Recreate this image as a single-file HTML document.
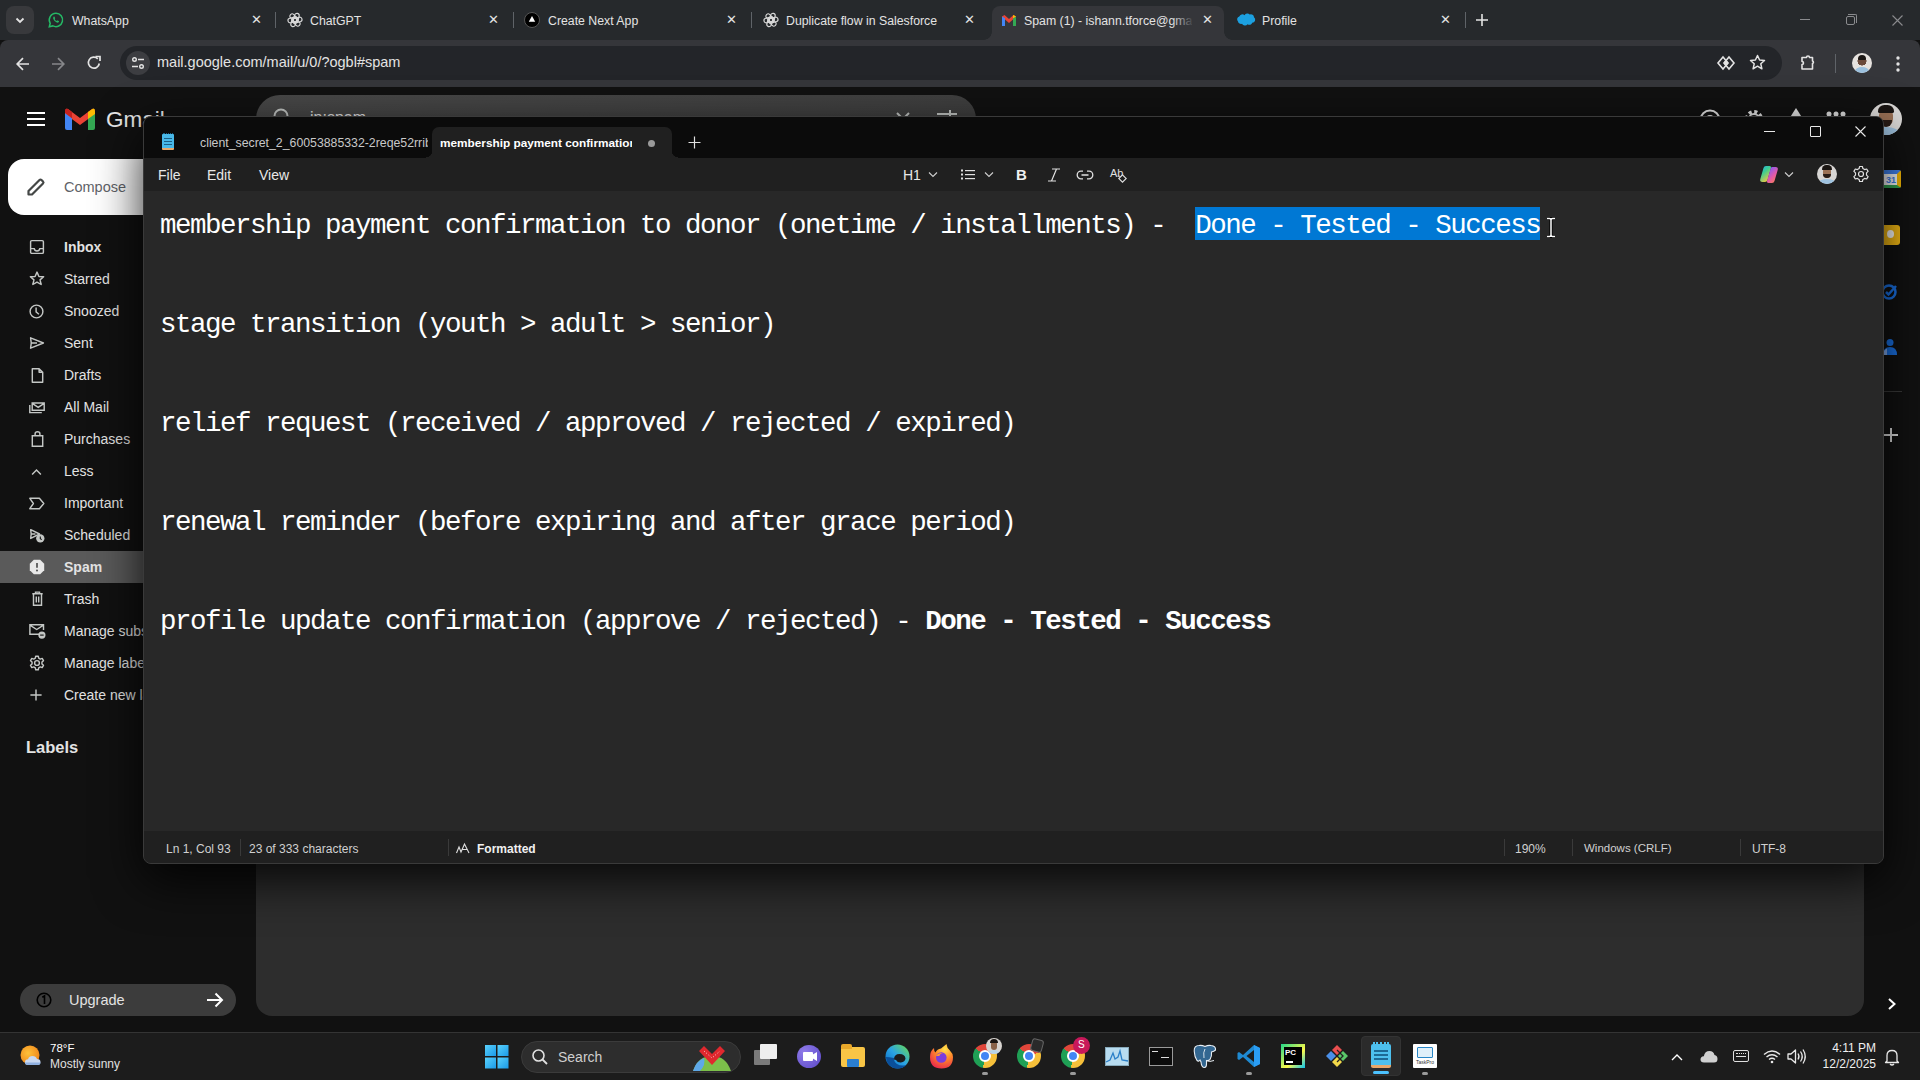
<!DOCTYPE html>
<html><head><meta charset="utf-8">
<style>
*{margin:0;padding:0;box-sizing:border-box}
html,body{width:1920px;height:1080px;overflow:hidden;background:#111111;font-family:"Liberation Sans",sans-serif;position:relative}
.a{position:absolute}
.t{position:absolute;white-space:nowrap}
svg{position:absolute;overflow:visible}
.ni{transform:scale(0.8);transform-origin:50% 50%}
/* chrome */
#tabstrip{left:0;top:0;width:1920px;height:40px;background:#26292c}
#toolbar{left:0;top:40px;width:1920px;height:47px;background:#35363a;border-radius:8px 8px 0 0}
#omni{left:120px;top:46px;width:1662px;height:34px;background:#232529;border-radius:17px}
.tabtxt{font-size:12.3px;color:#e3e3e3;top:14px}
.tabx{font-size:13px;color:#e3e3e3}
.tsep{top:12px;width:1px;height:16px;background:#5f6368}
/* gmail */
#gm{left:0;top:87px;width:1920px;height:945px;background:#111111}
.nav{font-size:14px;color:#e3e3e3;left:64px;margin-top:1px}
/* taskbar */
#taskbar{left:0;top:1032px;width:1920px;height:48px;background:#1c1c1c;border-top:1px solid #343434}
/* notepad */
#np{left:143px;top:116px;width:1741px;height:748px;background:#282828;border-radius:8px;overflow:hidden;border:1px solid #3a3a3a;box-shadow:0 16px 48px rgba(0,0,0,0.85)}
#nptitle{left:0;top:0;width:100%;height:41px;background:#0b0b0b}
#npmenu{left:0;top:41px;width:100%;height:33px;background:#202020}
#npstatus{left:0;top:714px;width:100%;height:33px;background:#202020}
.mono{font-family:"Liberation Mono",monospace;font-size:27.5px;letter-spacing:-1.5px;color:#ffffff;left:16px;white-space:pre}
</style></head><body>

<div id="tabstrip" class="a">
  <div class="a" style="left:6px;top:6px;width:28px;height:28px;border-radius:8px;background:#38393c"></div>
  <svg style="left:14px;top:14px" width="12" height="12" viewBox="0 0 12 12"><path d="M2.5 4.5 L6 8 L9.5 4.5" stroke="#e3e3e3" stroke-width="1.8" fill="none"/></svg>
  <!-- tab1 whatsapp -->
  <svg style="left:48px;top:12px" width="16" height="16" viewBox="0 0 16 16"><path d="M8 1.2a6.7 6.7 0 0 0-5.8 10.1L1.3 14.8l3.6-.9A6.7 6.7 0 1 0 8 1.2z" fill="none" stroke="#25b865" stroke-width="1.5"/><path d="M5.6 4.8c.3-.3.7-.3.9 0l.6 1.2c.1.3 0 .5-.2.7l-.3.3c.4.9 1.1 1.6 2 2l.3-.3c.2-.2.5-.3.7-.2l1.2.6c.3.2.3.6 0 .9-.5.6-1.2.8-2 .5A6 6 0 0 1 5.3 7c-.3-.8-.2-1.6.3-2.2z" fill="#25b865"/></svg>
  <span class="t tabtxt" style="left:72px">WhatsApp</span>
  <span class="t tabx" style="left:251px;top:12px">&#x2715;</span>
  <div class="a tsep" style="left:275px"></div>
  <!-- tab2 chatgpt -->
  <svg style="left:287px;top:12px" width="16" height="16" viewBox="0 0 16 16"><g fill="none" stroke="#d8d8d8" stroke-width="1.15"><rect x="6.4" y="1" width="4.6" height="9.6" rx="2.3" transform="rotate(15 8 8)"/><rect x="6.4" y="1" width="4.6" height="9.6" rx="2.3" transform="rotate(75 8 8)"/><rect x="6.4" y="1" width="4.6" height="9.6" rx="2.3" transform="rotate(135 8 8)"/><rect x="6.4" y="1" width="4.6" height="9.6" rx="2.3" transform="rotate(195 8 8)"/><rect x="6.4" y="1" width="4.6" height="9.6" rx="2.3" transform="rotate(255 8 8)"/><rect x="6.4" y="1" width="4.6" height="9.6" rx="2.3" transform="rotate(315 8 8)"/></g></svg>
  <span class="t tabtxt" style="left:310px">ChatGPT</span>
  <span class="t tabx" style="left:488px;top:12px">&#x2715;</span>
  <div class="a tsep" style="left:513px"></div>
  <!-- tab3 next -->
  <div class="a" style="left:524px;top:12px;width:16px;height:16px;border-radius:50%;background:#000;border:1px solid #555"></div>
  <svg style="left:528px;top:15px" width="8" height="8" viewBox="0 0 8 8"><path d="M4 1 L7.2 6.8 H0.8z" fill="#fff"/></svg>
  <span class="t tabtxt" style="left:548px">Create Next App</span>
  <span class="t tabx" style="left:726px;top:12px">&#x2715;</span>
  <div class="a tsep" style="left:751px"></div>
  <!-- tab4 -->
  <svg style="left:763px;top:12px" width="16" height="16" viewBox="0 0 16 16"><g fill="none" stroke="#d8d8d8" stroke-width="1.15"><rect x="6.4" y="1" width="4.6" height="9.6" rx="2.3" transform="rotate(15 8 8)"/><rect x="6.4" y="1" width="4.6" height="9.6" rx="2.3" transform="rotate(75 8 8)"/><rect x="6.4" y="1" width="4.6" height="9.6" rx="2.3" transform="rotate(135 8 8)"/><rect x="6.4" y="1" width="4.6" height="9.6" rx="2.3" transform="rotate(195 8 8)"/><rect x="6.4" y="1" width="4.6" height="9.6" rx="2.3" transform="rotate(255 8 8)"/><rect x="6.4" y="1" width="4.6" height="9.6" rx="2.3" transform="rotate(315 8 8)"/></g></svg>
  <span class="t tabtxt" style="left:786px">Duplicate flow in Salesforce</span>
  <span class="t tabx" style="left:964px;top:12px">&#x2715;</span>
  <!-- active tab -->
  <div class="a" style="left:992px;top:6px;width:232px;height:34px;background:#35363a;border-radius:8px 8px 0 0"></div>
  <div class="a" style="left:984px;top:32px;width:8px;height:8px;background:radial-gradient(circle at 0 0,#26292c 7.5px,#35363a 8px)"></div>
  <div class="a" style="left:1224px;top:32px;width:8px;height:8px;background:radial-gradient(circle at 100% 0,#26292c 7.5px,#35363a 8px)"></div>
  <svg style="left:1001px;top:14px" width="16" height="12" viewBox="0 0 16 12"><path d="M1 12V2.5L3.5 1 8 5 12.5 1 15 2.5V12h-3V5.5L8 9 4 5.5V12z" fill="#ea4335"/><path d="M1 12V2.5L4 4.2V12z" fill="#4285f4"/><path d="M15 12V2.5L12 4.2V12z" fill="#34a853"/><path d="M12 4.2 15 2.5 12.5 1 12 1.5z" fill="#fbbc04"/></svg>
  <div class="a" style="left:1024px;top:0;width:168px;height:40px;overflow:hidden"><span class="t tabtxt" style="left:0">Spam (1) - ishann.tforce@gmail.com</span></div>
  <div class="a" style="left:1172px;top:6px;width:22px;height:34px;background:linear-gradient(90deg,rgba(53,54,58,0),#35363a)"></div>
  <span class="t tabx" style="left:1202px;top:12px">&#x2715;</span>
  <!-- tab6 profile -->
  <svg style="left:1237px;top:13px" width="18" height="14" viewBox="0 0 18 14"><path d="M7.5 2.2a3.2 3.2 0 0 1 5.2-.6 3 3 0 0 1 4.3 2.7 3 3 0 0 1-1.8 5.4 3 3 0 0 1-4.6 1.6 3.3 3.3 0 0 1-5.6-.6A3 3 0 0 1 1 8.4a3 3 0 0 1 1.3-5 3.2 3.2 0 0 1 5.2-1.2z" fill="#1ca0e0"/></svg>
  <span class="t tabtxt" style="left:1262px">Profile</span>
  <span class="t tabx" style="left:1440px;top:12px">&#x2715;</span>
  <div class="a tsep" style="left:1465px"></div>
  <svg style="left:1475px;top:13px" width="14" height="14" viewBox="0 0 14 14"><path d="M7 1V13M1 7H13" stroke="#e3e3e3" stroke-width="1.6"/></svg>
  <!-- window controls -->
  <div class="a" style="left:1800px;top:19px;width:10px;height:1px;background:#8a8b8e"></div>
  <div class="a" style="left:1846px;top:16px;width:9px;height:9px;border:1px solid #8a8b8e;border-radius:2px"></div>
  <div class="a" style="left:1848px;top:14px;width:9px;height:9px;border-top:1px solid #8a8b8e;border-right:1px solid #8a8b8e;border-radius:0 2px 0 0"></div>
  <svg style="left:1892px;top:15px" width="11" height="11" viewBox="0 0 11 11"><path d="M0.5 0.5L10.5 10.5M10.5 0.5L0.5 10.5" stroke="#8a8b8e" stroke-width="1.1"/></svg>
</div>
<div id="toolbar" class="a">
  <svg style="left:15px;top:16px" width="16" height="16" viewBox="0 0 16 16"><path d="M14 8H2.5M8 2.2 2.2 8 8 13.8" stroke="#e3e3e3" stroke-width="1.7" fill="none"/></svg>
  <svg style="left:50px;top:16px" width="16" height="16" viewBox="0 0 16 16"><path d="M2 8H13.5M8 2.2 13.8 8 8 13.8" stroke="#86878a" stroke-width="1.7" fill="none"/></svg>
  <svg style="left:86px;top:15px" width="16" height="16" viewBox="0 0 16 16"><path d="M13.3 8.5A5.5 5.5 0 1 1 11.8 3.8" stroke="#e3e3e3" stroke-width="1.7" fill="none"/><path d="M9.5 1.5H14V6" stroke="#e3e3e3" stroke-width="1.7" fill="none"/></svg>
</div>
<div id="omni" class="a">
  <div class="a" style="left:6px;top:5px;width:24px;height:24px;border-radius:50%;background:#3c3d41"></div>
  <svg style="left:11px;top:10px" width="14" height="14" viewBox="0 0 14 14"><g stroke="#e3e3e3" stroke-width="1.4" fill="none"><circle cx="3.5" cy="3.5" r="1.8"/><path d="M7 3.5H13M1 10.5H7"/><circle cx="10.5" cy="10.5" r="1.8"/></g></svg>
  <span class="t" style="left:37px;top:8px;font-size:14.5px;color:#e3e3e3">mail.google.com/mail/u/0/?ogbl#spam</span>
  <svg style="left:1597px;top:9px" width="18" height="16" viewBox="0 0 18 16"><g fill="none" stroke="#e3e3e3" stroke-width="1.6"><path d="M6 2 1 8 6 14 11 8z"/><path d="M12 2 17 8 12 14 7 8z"/></g><path d="M9 4.5 11.5 8 9 11.5 6.5 8z" fill="#e3e3e3"/></svg>
  <svg style="left:1629px;top:8px" width="17" height="17" viewBox="0 0 17 17"><path d="M8.5 1.5 10.6 6 15.5 6.5 11.8 9.8 12.9 14.8 8.5 12.2 4.1 14.8 5.2 9.8 1.5 6.5 6.4 6z" fill="none" stroke="#e3e3e3" stroke-width="1.5" stroke-linejoin="round"/></svg>
</div>
<div class="a" style="left:0;top:40px;width:1920px;height:47px;pointer-events:none">
  <svg style="left:1800px;top:14px" width="18" height="18" viewBox="0 0 18 18"><path d="M2 3.5H6.5A1.5 1.5 0 0 1 9.5 3.5H12.5V7A1.3 1.3 0 0 1 12.5 9.5V15H2V10.5A1.5 1.5 0 0 0 2 7.5z" fill="none" stroke="#e3e3e3" stroke-width="1.6" stroke-linejoin="round"/></svg>
  <div class="a" style="left:1835px;top:14px;width:1px;height:19px;background:#5f6368"></div>
  <div class="a" style="left:1852px;top:13px;width:20px;height:20px;border-radius:50%;background:radial-gradient(circle at 50% 40%,#6b4a3a 0 28%,#e6e2de 30%);overflow:hidden"><div class="a" style="left:3px;top:14px;width:14px;height:8px;border-radius:50%;background:#9cc1de"></div><div class="a" style="left:6px;top:2px;width:8px;height:5px;border-radius:4px 4px 1px 1px;background:#1b1714"></div></div>
  <svg style="left:1895px;top:15px" width="6" height="18" viewBox="0 0 6 18"><circle cx="3" cy="3" r="1.7" fill="#e3e3e3"/><circle cx="3" cy="9" r="1.7" fill="#e3e3e3"/><circle cx="3" cy="15" r="1.7" fill="#e3e3e3"/></svg>
</div>
<div id="gm" class="a">
  <div class="a" style="left:27px;top:25px;width:18px;height:2px;background:#fff"></div>
  <div class="a" style="left:27px;top:31px;width:18px;height:2px;background:#fff"></div>
  <div class="a" style="left:27px;top:37px;width:18px;height:2px;background:#fff"></div>
  <svg style="left:65px;top:21px" width="30" height="22" viewBox="0 0 30 22"><path d="M0 3.5Q0 0 3 1L15 10 27 1Q30 0 30 3.5V6L15 17 0 6z" fill="#ea4335"/><path d="M0 5 7 10.2V22H2Q0 22 0 20z" fill="#4285f4"/><path d="M30 5 23 10.2V22H28Q30 22 30 20z" fill="#34a853"/><path d="M23 4 27.3 0.9Q30 -0.5 30 3.5V6L23 11z" fill="#fbbc04"/><path d="M0 3.5Q0 -0.5 3 1L7 4V10.2L0 5z" fill="#c5221f"/></svg>
  <span class="t" style="left:106px;top:20px;font-size:22.5px;color:#e8e8e8">Gmail</span>
  <!-- search -->
  <div class="a" style="left:256px;top:8px;width:720px;height:48px;border-radius:24px;background:linear-gradient(170deg,#484848,#3c3c3c)"></div>
  <svg style="left:272px;top:20px" width="22" height="22" viewBox="0 0 22 22"><circle cx="9" cy="9" r="6.5" fill="none" stroke="#c4c7c5" stroke-width="2"/><path d="M14 14 20 20" stroke="#c4c7c5" stroke-width="2"/></svg>
  <span class="t" style="left:310px;top:22px;font-size:16px;color:#e3e3e3">in:spam</span>
  <svg style="left:895px;top:24px" width="16" height="16" viewBox="0 0 16 16"><path d="M2 2 14 14M14 2 2 14" stroke="#c4c7c5" stroke-width="2"/></svg>
  <svg style="left:936px;top:22px" width="22" height="18" viewBox="0 0 22 18"><path d="M1 5H21M1 12H21" stroke="#c4c7c5" stroke-width="2"/><path d="M14 1V9M7 8V16" stroke="#c4c7c5" stroke-width="2"/></svg>
  <!-- right header icons -->
  <svg style="left:1698px;top:21px" width="24" height="24" viewBox="0 0 24 24"><circle cx="12" cy="12" r="9.5" fill="none" stroke="#e3e3e3" stroke-width="2"/><circle cx="12" cy="12" r="4" fill="none" stroke="#e3e3e3" stroke-width="2"/></svg>
  <svg style="left:1742px;top:20px" width="24" height="24" viewBox="0 0 24 24"><circle cx="12" cy="12" r="7" fill="none" stroke="#e3e3e3" stroke-width="4" stroke-dasharray="3 2.5"/><circle cx="12" cy="12" r="5" fill="none" stroke="#e3e3e3" stroke-width="2"/></svg>
  <svg style="left:1786px;top:20px" width="20" height="20" viewBox="0 0 20 20"><path d="M10 1 17 12H3z" fill="#e3e3e3"/></svg>
  <svg style="left:1826px;top:24px" width="20" height="6" viewBox="0 0 20 6"><circle cx="3" cy="3" r="2.5" fill="#e3e3e3"/><circle cx="10" cy="3" r="2.5" fill="#e3e3e3"/><circle cx="17" cy="3" r="2.5" fill="#e3e3e3"/></svg>
  <div class="a" style="left:1870px;top:16px;width:32px;height:32px;border-radius:50%;background:#dcdad8;overflow:hidden"><div class="a" style="left:9px;top:5px;width:14px;height:18px;border-radius:7px;background:#9c7256"></div><div class="a" style="left:8px;top:2px;width:16px;height:8px;border-radius:8px 8px 2px 2px;background:#1a1512"></div><div class="a" style="left:10px;top:17px;width:12px;height:7px;border-radius:0 0 6px 6px;background:#2a1d17"></div><div class="a" style="left:2px;top:24px;width:28px;height:14px;border-radius:50%;background:#9fc3e0"></div></div>
  <!-- compose -->
  <div class="a" style="left:8px;top:72px;width:170px;height:56px;border-radius:16px;background:#ffffff"></div>
  <svg style="left:26px;top:90px" width="20" height="20" viewBox="0 0 20 20"><path d="M2.5 17.5V14L13.5 3Q14.5 2 15.5 3L17 4.5Q18 5.5 17 6.5L6 17.5z" fill="none" stroke="#444746" stroke-width="2.2" stroke-linejoin="round"/></svg>
  <span class="t" style="left:64px;top:92px;font-size:14.5px;color:#5f6368">Compose</span>
  <!-- nav -->
  <div class="a" style="left:0;top:464px;width:200px;height:32px;border-radius:0 16px 16px 0;background:#5a5a5a"></div>
  <!-- nav icons -->
  <svg class="ni" style="left:28px;top:151px" width="18" height="18" viewBox="0 0 18 18"><rect x="1" y="1" width="16" height="16" rx="1.5" stroke="#c4c7c5" stroke-width="1.8" fill="none"/><path d="M1 11H5.5Q6 14 9 14 12 14 12.5 11H17" stroke="#c4c7c5" stroke-width="1.8" fill="none"/></svg>
  <svg class="ni" style="left:27px;top:182px" width="20" height="19" viewBox="0 0 20 19"><path d="M10 1.5 12.4 7 18.3 7.4 13.8 11.2 15.2 17 10 13.9 4.8 17 6.2 11.2 1.7 7.4 7.6 7z" stroke="#c4c7c5" stroke-width="1.8" fill="none" stroke-linejoin="round"/></svg>
  <svg class="ni" style="left:27px;top:215px" width="19" height="19" viewBox="0 0 19 19"><circle cx="9.5" cy="9.5" r="8" stroke="#c4c7c5" stroke-width="1.8" fill="none"/><path d="M9 4.5V10L12.5 13" stroke="#c4c7c5" stroke-width="1.8" fill="none"/></svg>
  <svg class="ni" style="left:28px;top:248px" width="18" height="16" viewBox="0 0 18 16"><path d="M1 1.5 17 8 1 14.5 1.8 8z M1.8 8H9" stroke="#c4c7c5" stroke-width="1.8" fill="none" stroke-linejoin="round"/></svg>
  <svg class="ni" style="left:30px;top:279px" width="15" height="19" viewBox="0 0 15 19"><path d="M1 1H9.5L14 5.5V18H1z M9.5 1V5.5H14" stroke="#c4c7c5" stroke-width="1.8" fill="none" stroke-linejoin="round"/></svg>
  <svg class="ni" style="left:27px;top:311px" width="20" height="18" viewBox="0 0 20 18"><path d="M4 4H19V13H4z M4 4.5 11.5 9.5 19 4.5" stroke="#c4c7c5" stroke-width="1.8" fill="none"/><path d="M1 6.5V16H16" stroke="#c4c7c5" stroke-width="1.8" fill="none"/></svg>
  <svg class="ni" style="left:30px;top:342px" width="15" height="20" viewBox="0 0 15 20"><path d="M1 6H14V19H1z M4.5 6V3.5Q4.5 1 7.5 1 10.5 1 10.5 3.5V6" stroke="#c4c7c5" stroke-width="1.8" fill="none"/></svg>
  <svg class="ni" style="left:30px;top:381px" width="13" height="8" viewBox="0 0 13 8"><path d="M1 7 6.5 1.5 12 7" stroke="#c4c7c5" stroke-width="1.8" fill="none"/></svg>
  <svg class="ni" style="left:27px;top:409px" width="20" height="15" viewBox="0 0 20 15"><path d="M1 1H13L18.5 7.5 13 14H1L5.5 7.5z" stroke="#c4c7c5" stroke-width="1.8" fill="none" stroke-linejoin="round"/></svg>
  <svg class="ni" style="left:28px;top:440px" width="19" height="18" viewBox="0 0 19 18"><path d="M1 1 12 6.5 1 12 1.6 6.5z M1.6 6.5H7" stroke="#c4c7c5" stroke-width="1.8" fill="none" stroke-linejoin="round"/><circle cx="13" cy="12" r="5.2" fill="#c4c7c5"/><path d="M13 9.5V12.3L14.8 13.5" stroke="#111" stroke-width="1.3" fill="none"/></svg>
  <svg class="ni" style="left:27px;top:470px" width="20" height="20" viewBox="0 0 20 20"><path d="M6 1H14L19 6V14L14 19H6L1 14V6z" fill="#e8e8e8"/><path d="M10 5V11" stroke="#555" stroke-width="2.2"/><circle cx="10" cy="14.3" r="1.3" fill="#555"/></svg>
  <svg class="ni" style="left:30px;top:502px" width="15" height="19" viewBox="0 0 15 19"><path d="M1 3.5H14M5 3.5V1.5H10V3.5M2.5 3.5V18H12.5V3.5M6 7V14.5M9 7V14.5" stroke="#c4c7c5" stroke-width="1.8" fill="none"/></svg>
  <svg class="ni" style="left:27px;top:535px" width="21" height="19" viewBox="0 0 21 19"><path d="M14 13H1V1H18V7.5 M1 1.5 9.5 7 18 1.5" stroke="#c4c7c5" stroke-width="1.8" fill="none"/><circle cx="16" cy="14" r="4.5" fill="#c4c7c5"/><path d="M13.8 14H18.2" stroke="#111" stroke-width="1.4"/></svg>
  <svg class="ni" style="left:27px;top:566px" width="20" height="20" viewBox="0 0 20 20"><g stroke="#c4c7c5" stroke-width="1.8" fill="none"><circle cx="10" cy="10" r="3"/><path d="M8.4 1.5H11.6L12.1 4 14.1 5.1 16.5 4.3 18.1 7.1 16.2 8.8V11.2L18.1 12.9 16.5 15.7 14.1 14.9 12.1 16 11.6 18.5H8.4L7.9 16 5.9 14.9 3.5 15.7 1.9 12.9 3.8 11.2V8.8L1.9 7.1 3.5 4.3 5.9 5.1 7.9 4z" stroke-linejoin="round"/></g></svg>
  <svg class="ni" style="left:29px;top:601px" width="14" height="14" viewBox="0 0 14 14"><path d="M7 0V14M0 7H14" stroke="#c4c7c5" stroke-width="1.8" fill="none"/></svg>
  <span class="t nav" style="top:151px;font-weight:bold;">Inbox</span>
  <span class="t nav" style="top:183px;">Starred</span>
  <span class="t nav" style="top:215px;">Snoozed</span>
  <span class="t nav" style="top:247px;">Sent</span>
  <span class="t nav" style="top:279px;">Drafts</span>
  <span class="t nav" style="top:311px;">All Mail</span>
  <span class="t nav" style="top:343px;">Purchases</span>
  <span class="t nav" style="top:375px;">Less</span>
  <span class="t nav" style="top:407px;">Important</span>
  <span class="t nav" style="top:439px;">Scheduled</span>
  <span class="t nav" style="top:471px;font-weight:bold;">Spam</span>
  <span class="t nav" style="top:503px;">Trash</span>
  <span class="t nav" style="top:535px;">Manage subscriptions</span>
  <span class="t nav" style="top:567px;">Manage labels</span>
  <span class="t nav" style="top:599px;">Create new label</span>
  <span class="t" style="left:26px;top:651px;font-size:16.5px;font-weight:bold;color:#e3e3e3">Labels</span>
  <!-- gmail list panel -->
  <div class="a" style="left:256px;top:72px;width:1608px;height:857px;border-radius:16px;background:#2d2d2d"></div>
  <!-- upgrade -->
  <div class="a" style="left:20px;top:897px;width:216px;height:32px;border-radius:16px;background:#3c3c3c"></div>
  <svg style="left:36px;top:905px" width="16" height="16" viewBox="0 0 16 16"><circle cx="8" cy="8" r="6.8" fill="none" stroke="#000" stroke-width="1.6"/><path d="M6.3 5.3 8.5 4V12" stroke="#000" stroke-width="1.6" fill="none"/></svg>
  <span class="t" style="left:69px;top:905px;font-size:14.5px;color:#e3e3e3">Upgrade</span>
  <svg style="left:206px;top:904px" width="18" height="18" viewBox="0 0 18 18"><path d="M1 9H16M9.5 2.5 16 9 9.5 15.5" stroke="#fff" stroke-width="2" fill="none"/></svg>
  <!-- right side panel icons -->
  <div class="a" style="left:1882px;top:83px;width:19px;height:18px;border-radius:2px;background:#fff;border-top:4px solid #4285f4;border-left:2px solid #4285f4;border-right:4px solid #fbbc04;border-bottom:3px solid #34a853"></div>
  <span class="t" style="left:1886px;top:88px;font-size:9px;font-weight:bold;color:#4285f4">31</span>
  <div class="a" style="left:1881px;top:138px;width:19px;height:20px;border-radius:3px;background:#f5ba14"></div>
  <div class="a" style="left:1887px;top:143px;width:7px;height:8px;border-radius:50%;background:#fff"></div>
  <svg style="left:1881px;top:195px" width="18" height="18" viewBox="0 0 18 18"><circle cx="8" cy="10" r="6.5" fill="none" stroke="#1a73e8" stroke-width="2.5"/><path d="M5 10 7.5 12.5 15 4" stroke="#1a73e8" stroke-width="2.5" fill="none"/></svg>
  <svg style="left:1882px;top:251px" width="16" height="18" viewBox="0 0 16 18"><circle cx="8" cy="4.5" r="3.5" fill="#1a73e8"/><path d="M1 17Q1 9 8 9 15 9 15 17z" fill="#1a73e8"/><path d="M1 17Q1 12 5 10.5V17z" fill="#8ab4f8"/></svg>
  <div class="a" style="left:1880px;top:304px;width:22px;height:1px;background:#3a3a3a"></div>
  <svg style="left:1884px;top:341px" width="14" height="14" viewBox="0 0 14 14"><path d="M7 0V14M0 7H14" stroke="#e3e3e3" stroke-width="2"/></svg>
  <svg style="left:1887px;top:911px" width="10" height="12" viewBox="0 0 10 12"><path d="M2 1 7.5 6 2 11" stroke="#fff" stroke-width="2" fill="none"/></svg>
</div>
<div id="taskbar" class="a">
  <!-- weather -->
  <svg style="left:20px;top:11px" width="26" height="24" viewBox="0 0 26 24"><defs><radialGradient id="sun" cx="0.4" cy="0.4" r="0.6"><stop offset="0" stop-color="#ffc23a"/><stop offset="1" stop-color="#f08a1c"/></radialGradient></defs><circle cx="10" cy="11" r="9.5" fill="url(#sun)"/><path d="M8 21Q5 21 5 18 5 15.5 8 15.2 9 12 12.5 12 16 12 17 15 20.5 15 20.5 18 20.5 21 17.5 21z" fill="#c9d8f0"/><path d="M8 21Q5 21 5 18.5H20.5Q20.5 21 17.5 21z" fill="#8fb0e0"/></svg>
  <span class="t" style="left:50px;top:9px;font-size:11.5px;color:#ffffff">78°F</span>
  <span class="t" style="left:50px;top:24px;font-size:12px;color:#e0e0e0">Mostly sunny</span>
  <!-- start -->
  <svg style="left:485px;top:12px" width="24" height="24" viewBox="0 0 24 24"><defs><linearGradient id="win" x1="0" y1="0" x2="1" y2="1"><stop offset="0" stop-color="#5ad1fb"/><stop offset="1" stop-color="#1a9ae8"/></linearGradient></defs><rect x="0" y="0" width="11" height="11" fill="url(#win)"/><rect x="12.5" y="0" width="11" height="11" fill="url(#win)"/><rect x="0" y="12.5" width="11" height="11" fill="url(#win)"/><rect x="12.5" y="12.5" width="11" height="11" fill="url(#win)"/></svg>
  <!-- search pill -->
  <div class="a" style="left:521px;top:8px;width:220px;height:32px;border-radius:16px;background:#2d2d2d;border:1px solid #3b3b3b"></div>
  <svg style="left:531px;top:15px" width="18" height="18" viewBox="0 0 18 18"><circle cx="7.5" cy="7.5" r="5.5" fill="none" stroke="#e0e0e0" stroke-width="1.6"/><path d="M11.5 11.5 16 16" stroke="#e0e0e0" stroke-width="1.8"/></svg>
  <span class="t" style="left:558px;top:16px;font-size:14px;color:#cfcfcf">Search</span>
  <svg style="left:692px;top:12px" width="40" height="26" viewBox="0 0 40 26"><path d="M1 26Q6 11 20 11 34 11 39 26z" fill="#7cc04a"/><path d="M1 26Q4 16 12 13 14 20 8 26z" fill="#5ea8e8"/><path d="M12 1 20 9 28 1 33 6 20 20 7 6z" fill="#e0282e"/><path d="M12 6 20 13 28 6" stroke="#fff" stroke-width="0.8" fill="none" stroke-dasharray="1 2"/></svg>
  <div class="a" style="left:0;top:-1px;width:1920px;height:48px">
  <!-- task view -->
  <div class="a" style="left:754px;top:18px;width:16px;height:15px;background:#7a7a7a;border-radius:1px"></div>
  <div class="a" style="left:760px;top:12px;width:17px;height:15px;background:#efefef;border-radius:1px"></div>
  <!-- meet -->
  <div class="a" style="left:797px;top:13px;width:24px;height:23px;border-radius:50%;background:radial-gradient(circle at 30% 30%,#8f7be8,#5b48c8)"></div>
  <div class="a" style="left:803px;top:20px;width:10px;height:9px;background:#fff;border-radius:1px"></div>
  <svg style="left:812px;top:20px" width="5" height="9" viewBox="0 0 5 9"><path d="M0 3 5 0V9L0 6z" fill="#fff"/></svg>
  <!-- explorer -->
  <div class="a" style="left:841px;top:15px;width:24px;height:20px;background:#f8c546;border-radius:2px"></div>
  <div class="a" style="left:841px;top:12px;width:11px;height:5px;background:#e9a82a;border-radius:2px 2px 0 0"></div>
  <div class="a" style="left:847px;top:27px;width:12px;height:8px;background:#2a7ed0;border-radius:1px"></div>
  <!-- edge -->
  <svg style="left:885px;top:12px" width="25" height="25" viewBox="0 0 25 25"><defs><linearGradient id="edg" x1="0.1" y1="0.9" x2="0.9" y2="0.1"><stop offset="0" stop-color="#0c6fc4"/><stop offset="0.5" stop-color="#2aa3e6"/><stop offset="1" stop-color="#5fd467"/></linearGradient></defs><circle cx="12.5" cy="12.5" r="12" fill="url(#edg)"/><path d="M9 15.5Q9 10 14.5 10 20 10 20.5 14.5 20 18 16 18.5 12.5 18.8 11 16z" fill="#1c1c1c"/><path d="M0.8 13Q2 24 12.5 24.5 18 24.5 21 21 16 22.5 12 20 8.5 17.5 9 14Q4 13 0.8 13z" fill="#0a4f9a"/></svg>
  <!-- firefox -->
  <svg style="left:929px;top:11px" width="25" height="26" viewBox="0 0 25 26"><defs><radialGradient id="ffx" cx="0.65" cy="0.2" r="0.9"><stop offset="0" stop-color="#ffe14a"/><stop offset="0.45" stop-color="#ff8a2a"/><stop offset="1" stop-color="#e8204f"/></radialGradient></defs><path d="M12.5 25.5Q1 25.5 1 14 1 8 5 5 4.8 8 6.5 9.5 8 6 12 5.5 16 2 17.5 1 18 5 20.5 7 24 10.5 24 14 24 25.5 12.5 25.5z" fill="url(#ffx)"/><circle cx="12.3" cy="14.5" r="5.3" fill="#7b3ddb"/><path d="M7 13Q9 9.5 14 10 10.5 11 10.5 13z" fill="#ff9a2a"/></svg>
  <div class="a" style="left:973px;top:12px;width:24px;height:24px;border-radius:50%;background:conic-gradient(from -50deg,#e0463a 0 120deg,#f6c03a 120deg 240deg,#1fa055 240deg 360deg)"></div>
  <div class="a" style="left:979px;top:18px;width:12px;height:12px;border-radius:50%;background:#4285f4;border:2px solid #fff"></div>
  <div class="a" style="left:986px;top:6px;width:16px;height:16px;border-radius:50%;background:#d8d4d0;overflow:hidden"><div class="a" style="left:5px;top:3px;width:6px;height:9px;border-radius:3px;background:#8a6248"></div><div class="a" style="left:4px;top:1px;width:8px;height:4px;border-radius:4px 4px 0 0;background:#1a1512"></div><div class="a" style="left:2px;top:12px;width:12px;height:6px;border-radius:50%;background:#b8d4e8"></div></div>
  <div class="a" style="left:1017px;top:12px;width:24px;height:24px;border-radius:50%;background:conic-gradient(from -50deg,#e0463a 0 120deg,#f6c03a 120deg 240deg,#1fa055 240deg 360deg)"></div>
  <div class="a" style="left:1023px;top:18px;width:12px;height:12px;border-radius:50%;background:#4285f4;border:2px solid #fff"></div>
  <div class="a" style="left:1031px;top:7px;width:12px;height:13px;border-radius:3px;background:#2a2a2a;border:1px solid #666;transform:rotate(15deg)"></div>
  <div class="a" style="left:1061px;top:12px;width:24px;height:24px;border-radius:50%;background:conic-gradient(from -50deg,#e0463a 0 120deg,#f6c03a 120deg 240deg,#1fa055 240deg 360deg)"></div>
  <div class="a" style="left:1067px;top:18px;width:12px;height:12px;border-radius:50%;background:#4285f4;border:2px solid #fff"></div>
  <div class="a" style="left:1073px;top:5px;width:17px;height:17px;border-radius:50%;background:#c8185a"></div><span class="t" style="left:1078px;top:7px;font-size:10px;color:#fff">S</span>
  <!-- resource monitor -->
  <div class="a" style="left:1105px;top:15px;width:24px;height:19px;background:#b8dcf0;border:1px solid #8ab"></div>
  <svg style="left:1106px;top:18px" width="22" height="14" viewBox="0 0 22 14"><path d="M0 12 4 10 7 3 9 9 12 7 14 1 16 10 22 11" stroke="#2a7fc8" stroke-width="1.3" fill="none"/></svg>
  <!-- cmd -->
  <div class="a" style="left:1149px;top:15px;width:24px;height:19px;background:#0c0c0c;border:1px solid #9a9a9a"></div>
  <div class="a" style="left:1152px;top:19px;width:6px;height:4px;border-top:1px solid #ddd"></div>
  <div class="a" style="left:1161px;top:25px;width:8px;height:1px;background:#ddd"></div>
  <!-- postgres -->
  <svg style="left:1193px;top:12px" width="24" height="25" viewBox="0 0 24 25"><path d="M6 1.5Q1 1.5 1.2 7 1.5 13 4 16.5 5.5 18 7 16L8 18Q8.5 23.5 11.5 23.5 13.5 23.5 13.5 20V16.5Q15.5 17 17 15.5 19 12 18.5 8Q21 7.5 22.5 6 23 2 18 1.5 15 1 12 2.5 9 1 6 1.5z" fill="#336791" stroke="#e8eef4" stroke-width="1.1"/><path d="M13.5 16.5Q16 18.5 21 16.5" stroke="#e8eef4" stroke-width="1" fill="none"/><path d="M12 5Q10 8 11 14" stroke="#e8eef4" stroke-width="0.9" fill="none"/></svg>
  <!-- vscode -->
  <svg style="left:1237px;top:12px" width="24" height="24" viewBox="0 0 24 24"><path d="M17 1 23 4V20L17 23 6 13 2 16 0.5 15V9L2 8 6 11z" fill="#1f8ad2"/><path d="M17 6V18L9.5 12z" fill="#1c1c1c"/><path d="M17 1 23 4V20L17 23z" fill="#2a9df4"/></svg>
  <!-- pycharm -->
  <div class="a" style="left:1281px;top:12px;width:24px;height:24px;background:linear-gradient(135deg,#21d789,#fcf84a 60%,#07c3f2)"></div>
  <div class="a" style="left:1284px;top:15px;width:18px;height:18px;background:#000"></div>
  <span class="t" style="left:1285px;top:16px;font-size:8px;font-weight:bold;color:#fff">PC</span>
  <div class="a" style="left:1286px;top:29px;width:7px;height:1.5px;background:#fff"></div>
  <!-- git tool -->
  <svg style="left:1325px;top:12px" width="24" height="24" viewBox="0 0 24 24"><path d="M12 1 17 6 12 11 7 6z" fill="#e94f4f"/><path d="M6 7 11 12 6 17 1 12z" fill="#4a8fe8"/><path d="M18 7 23 12 18 17 13 12z" fill="#5ac86a"/><path d="M12 13 17 18 12 23 7 18z" fill="#f3d94a"/><path d="M12 6 18 12 12 18" stroke="#222" stroke-width="1.3" fill="none"/></svg>
  <!-- notepad active -->
  <div class="a" style="left:1361px;top:4px;width:40px;height:40px;border-radius:4px;background:#2b2b2b;border:1px solid #333"></div>
  <div class="a" style="left:1371px;top:12px;width:20px;height:24px;border-radius:2px;background:#4dc0ee;border-bottom:3px solid #e8a86a"></div>
  <div class="a" style="left:1374px;top:18px;width:14px;height:1.5px;background:#1d6a95;box-shadow:0 4px 0 #1d6a95,0 8px 0 #1d6a95"></div>
  <div class="a" style="left:1373px;top:10px;width:16px;height:3px;border-top:2px dotted #4dc0ee"></div>
  <div class="a" style="left:1373px;top:39px;width:16px;height:3px;border-radius:2px;background:#4cc2ff"></div>
  <!-- taskpro -->
  <div class="a" style="left:1413px;top:12px;width:24px;height:24px;background:#fff;border-radius:1px"></div>
  <div class="a" style="left:1417px;top:15px;width:16px;height:11px;border:1.5px solid #2a88c8;border-radius:1px;background:#dff0fa"></div>
  <span class="t" style="left:1416px;top:27px;font-size:5px;color:#333">TaskPro</span>
  </div>
  <!-- running dots -->
  <div class="a" style="left:982px;top:39px;width:6px;height:3px;border-radius:2px;background:#9a9a9a"></div>
  <div class="a" style="left:1070px;top:39px;width:6px;height:3px;border-radius:2px;background:#9a9a9a"></div>
  <div class="a" style="left:1246px;top:39px;width:6px;height:3px;border-radius:2px;background:#9a9a9a"></div>
  <div class="a" style="left:1422px;top:39px;width:6px;height:3px;border-radius:2px;background:#9a9a9a"></div>
  <!-- tray -->
  <svg style="left:1671px;top:20px" width="12" height="8" viewBox="0 0 12 8"><path d="M1 7 6 2 11 7" stroke="#fff" stroke-width="1.4" fill="none"/></svg>
  <svg style="left:1700px;top:17px" width="18" height="13" viewBox="0 0 18 13"><path d="M4 12.5Q0.5 12.5 0.5 9.5 0.5 6.5 3.8 6.3 4.8 1 9.5 1 13.5 1 14.5 5 17.5 5.5 17.5 9 17.5 12.5 14 12.5z" fill="#d0d0d0"/></svg>
  <div class="a" style="left:1733px;top:17px;width:16px;height:12px;border:1.3px solid #e0e0e0;border-radius:2px"></div>
  <div class="a" style="left:1736px;top:20px;width:10px;height:1px;border-top:1px dotted #e0e0e0;box-shadow:0 3px 0 #e0e0e0"></div>
  <svg style="left:1763px;top:16px" width="18" height="15" viewBox="0 0 18 15"><g fill="none" stroke="#e8e8e8" stroke-width="1.4"><path d="M1 5.5Q9 -1.5 17 5.5"/><path d="M3.5 8Q9 3.5 14.5 8"/><path d="M6 10.5Q9 8 12 10.5"/></g><circle cx="9" cy="13" r="1.3" fill="#e8e8e8"/></svg>
  <svg style="left:1787px;top:15px" width="19" height="17" viewBox="0 0 19 17"><g fill="none" stroke="#e8e8e8" stroke-width="1.3"><path d="M1 6H4L8.5 2V15L4 11H1z" stroke-linejoin="round"/><path d="M11 5.5Q13 8.5 11 11.5M13.5 3.5Q17 8.5 13.5 13.5M16 1.5Q20.5 8.5 16 15.5"/></g></svg>
  <span class="t" style="left:1822px;top:8px;font-size:12px;color:#f0f0f0;width:54px;text-align:right">4:11 PM</span>
  <span class="t" style="left:1818px;top:24px;font-size:12px;color:#f0f0f0;width:58px;text-align:right">12/2/2025</span>
  <svg style="left:1884px;top:15px" width="16" height="18" viewBox="0 0 16 18"><path d="M3 13V7.5Q3 2.5 8 2.5 13 2.5 13 7.5V13L14.5 14.5H1.5z" fill="none" stroke="#e8e8e8" stroke-width="1.3" stroke-linejoin="round"/><path d="M6 16Q8 18 10 16" stroke="#e8e8e8" stroke-width="1.3" fill="none"/></svg>
</div>
<div id="np" class="a">
  <div id="nptitle" class="a"><div class="a" style="left:0;top:1px;width:100%;height:40px">
    <div class="a" style="left:18px;top:16px;width:12px;height:16px;border-radius:1px;background:#48b8e8;border-bottom:2px solid #e8a86a"></div>
    <div class="a" style="left:20px;top:20px;width:8px;height:1px;background:#1d5f85;box-shadow:0 3px 0 #1d5f85,0 6px 0 #1d5f85"></div>
    <div class="a" style="left:19px;top:15px;width:10px;height:2px;border-top:1px dotted #1d5f85"></div>
    <div class="a" style="left:56px;top:0;width:228px;height:40px;overflow:hidden"><span class="t" style="left:0;top:18px;font-size:12.3px;color:#c8c8c8">client_secret_2_60053885332-2reqe52rribc4vqgm</span></div>
    <div class="a" style="left:288px;top:9px;width:240px;height:31px;background:#202020;border-radius:7px 7px 0 0"></div>
    <div class="a" style="left:282px;top:33px;width:6px;height:7px;background:radial-gradient(circle at 0 0,#0b0b0b 6px,#202020 6.5px)"></div>
    <div class="a" style="left:528px;top:33px;width:6px;height:7px;background:radial-gradient(circle at 100% 0,#0b0b0b 6px,#202020 6.5px)"></div>
    <div class="a" style="left:296px;top:9px;width:192px;height:31px;overflow:hidden"><span class="t" style="left:0;top:9px;font-size:11.8px;font-weight:bold;color:#ffffff">membership payment confirmation to donor</span></div>
    <div class="a" style="left:504px;top:22px;width:7px;height:7px;border-radius:50%;background:#9a9a9a"></div>
    <svg style="left:544px;top:18px" width="13" height="13" viewBox="0 0 13 13"><path d="M6.5 0.5V12.5M0.5 6.5H12.5" stroke="#e0e0e0" stroke-width="1.2"/></svg>
    <div class="a" style="left:1620px;top:13px;width:11px;height:1px;background:#e8e8e8"></div>
    <div class="a" style="left:1666px;top:8px;width:11px;height:11px;border:1.2px solid #e8e8e8;border-radius:1px"></div>
    <svg style="left:1711px;top:8px" width="11" height="11" viewBox="0 0 11 11"><path d="M0.5 0.5 10.5 10.5M10.5 0.5 0.5 10.5" stroke="#e8e8e8" stroke-width="1.1"/></svg>
  </div></div>
  <div id="npmenu" class="a">
    <span class="t" style="left:14px;top:9px;font-size:14px;color:#e8e8e8">File</span>
    <span class="t" style="left:63px;top:9px;font-size:14px;color:#e8e8e8">Edit</span>
    <span class="t" style="left:115px;top:9px;font-size:14px;color:#e8e8e8">View</span>
    <span class="t" style="left:759px;top:9px;font-size:14px;color:#e8e8e8">H1</span>
    <svg style="left:784px;top:13px" width="10" height="7" viewBox="0 0 10 7"><path d="M1 1.5 5 5.5 9 1.5" stroke="#cfcfcf" stroke-width="1.1" fill="none"/></svg>
    <svg style="left:817px;top:11px" width="14" height="11" viewBox="0 0 14 11"><g fill="#e0e0e0"><rect x="0" y="0.5" width="2" height="2"/><rect x="0" y="4.5" width="2" height="2"/><rect x="0" y="8.5" width="2" height="2"/><rect x="4" y="1" width="10" height="1.2"/><rect x="4" y="5" width="10" height="1.2"/><rect x="4" y="9" width="10" height="1.2"/></g></svg>
    <svg style="left:840px;top:13px" width="10" height="7" viewBox="0 0 10 7"><path d="M1 1.5 5 5.5 9 1.5" stroke="#cfcfcf" stroke-width="1.1" fill="none"/></svg>
    <span class="t" style="left:872px;top:8px;font-size:15px;font-weight:bold;color:#f0f0f0">B</span>
    <svg style="left:903px;top:10px" width="14" height="14" viewBox="0 0 14 14"><path d="M5 1H13M1 13H9M9.5 1 4.5 13" stroke="#e0e0e0" stroke-width="1.2" fill="none"/></svg>
    <svg style="left:933px;top:12px" width="16" height="10" viewBox="0 0 16 10"><path d="M6 1.2H4A3.8 3.8 0 0 0 4 8.8H6M10 1.2H12A3.8 3.8 0 0 1 12 8.8H10M4.5 5H11.5" stroke="#e0e0e0" stroke-width="1.3" fill="none"/></svg>
    <span class="t" style="left:966px;top:9px;font-size:11px;color:#e0e0e0">Ab</span>
    <svg style="left:974px;top:16px" width="9" height="9" viewBox="0 0 9 9"><path d="M4.5 0.8 8.2 4.5 4.5 8.2 0.8 4.5z" stroke="#e0e0e0" stroke-width="1.1" fill="#202020"/></svg>
    <!-- copilot -->
    <svg style="left:1615px;top:7px" width="20" height="19" viewBox="0 0 20 19"><defs><linearGradient id="cp1" x1="0" y1="0" x2="0.6" y2="1"><stop offset="0" stop-color="#1fa9f2"/><stop offset="0.45" stop-color="#3fcf8e"/><stop offset="1" stop-color="#f4c542"/></linearGradient><linearGradient id="cp2" x1="0.3" y1="0" x2="1" y2="1"><stop offset="0" stop-color="#7f5cf6"/><stop offset="0.5" stop-color="#e45aa7"/><stop offset="1" stop-color="#ff8a3d"/></linearGradient></defs><path d="M7 1H10.5Q12.5 1 12 3L8.5 15Q8 17 6 17H3.5Q0.5 17 1.3 14L4.5 3Q5 1 7 1z" fill="url(#cp1)"/><path d="M13 2H16.5Q19.5 2 18.7 5L15.5 16Q15 18 13 18H9.5Q7.5 18 8 16L11.5 4Q12 2 13 2z" fill="url(#cp2)"/></svg>
    <svg style="left:1640px;top:13px" width="10" height="7" viewBox="0 0 10 7"><path d="M1 1.5 5 5.5 9 1.5" stroke="#cfcfcf" stroke-width="1.1" fill="none"/></svg>
    <div class="a" style="left:1673px;top:6px;width:20px;height:20px;border-radius:50%;background:#d8d6d4;overflow:hidden"><div class="a" style="left:6px;top:3px;width:8px;height:11px;border-radius:4px;background:#9c7256"></div><div class="a" style="left:5px;top:1px;width:10px;height:5px;border-radius:5px 5px 1px 1px;background:#1a1512"></div><div class="a" style="left:6px;top:10px;width:8px;height:4px;border-radius:0 0 4px 4px;background:#2a1d17"></div><div class="a" style="left:1px;top:15px;width:18px;height:9px;border-radius:50%;background:#9fc3e0"></div></div>
    <svg style="left:1708px;top:7px" width="18" height="18" viewBox="0 0 18 18"><g fill="none" stroke="#e0e0e0" stroke-width="1.2"><circle cx="9" cy="9" r="2.5"/><path d="M7.6 1.5H10.4L10.9 3.6 12.6 4.6 14.7 4 16.1 6.4 14.5 7.9V10.1L16.1 11.6 14.7 14 12.6 13.4 10.9 14.4 10.4 16.5H7.6L7.1 14.4 5.4 13.4 3.3 14 1.9 11.6 3.5 10.1V7.9L1.9 6.4 3.3 4 5.4 4.6 7.1 3.6z" stroke-linejoin="round"/></g></svg>
  </div>
  <div class="a" style="left:1051px;top:90px;width:345px;height:33px;background:#0078d4"></div>
  <span class="t mono" style="top:93px">membership payment confirmation to donor (onetime / installments) -  Done - Tested - Success</span>
  <span class="t mono" style="top:192px">stage transition (youth &gt; adult &gt; senior)</span>
  <span class="t mono" style="top:291px">relief request (received / approved / rejected / expired)</span>
  <span class="t mono" style="top:390px">renewal reminder (before expiring and after grace period)</span>
  <span class="t mono" style="top:489px">profile update confirmation (approve / rejected) - <b>Done - Tested - Success</b></span>
  <!-- I-beam cursor -->
  <svg style="left:1401px;top:100px" width="12" height="21" viewBox="0 0 12 21"><path d="M2 1.5H4.5Q6 1.5 6 3V18Q6 19.5 4.5 19.5H2M10 1.5H7.5Q6 1.5 6 3V18Q6 19.5 7.5 19.5H10" stroke="#000" stroke-width="3.2" fill="none"/><path d="M2 1.5H4.5Q6 1.5 6 3V18Q6 19.5 4.5 19.5H2M10 1.5H7.5Q6 1.5 6 3V18Q6 19.5 7.5 19.5H10" stroke="#fff" stroke-width="1.5" fill="none"/></svg>
  <div id="npstatus" class="a">
    <span class="t" style="left:22px;top:11px;font-size:12px;color:#d0d0d0">Ln 1, Col 93</span>
    <div class="a" style="left:96px;top:8px;width:1px;height:17px;background:#3a3a3a"></div>
    <span class="t" style="left:105px;top:11px;font-size:12px;color:#d0d0d0">23 of 333 characters</span>
    <div class="a" style="left:304px;top:8px;width:1px;height:17px;background:#3a3a3a"></div>
    <svg style="left:312px;top:12px" width="14" height="12" viewBox="0 0 14 12"><path d="M0.5 10 3 4 5 9 8.5 1 13 10M6.5 6.5H11" stroke="#e0e0e0" stroke-width="1.1" fill="none"/></svg>
    <span class="t" style="left:333px;top:11px;font-size:12px;font-weight:bold;color:#f0f0f0">Formatted</span>
    <div class="a" style="left:1360px;top:8px;width:1px;height:17px;background:#3a3a3a"></div>
    <span class="t" style="left:1371px;top:11px;font-size:12px;color:#d0d0d0">190%</span>
    <div class="a" style="left:1428px;top:8px;width:1px;height:17px;background:#3a3a3a"></div>
    <span class="t" style="left:1440px;top:11px;font-size:11.5px;color:#d0d0d0">Windows (CRLF)</span>
    <div class="a" style="left:1596px;top:8px;width:1px;height:17px;background:#3a3a3a"></div>
    <span class="t" style="left:1608px;top:11px;font-size:12px;color:#d0d0d0">UTF-8</span>
  </div>
</div>
</body></html>
